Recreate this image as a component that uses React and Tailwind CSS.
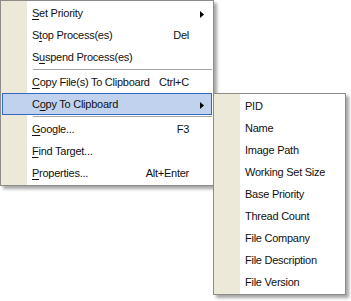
const mainItems = [
  { label: "Set Priority", u: 0, arrow: true },
  { label: "Stop Process(es)", u: 1, key: "Del" },
  { label: "Suspend Process(es)", u: 1 },
  { sep: true },
  { label: "Copy File(s) To Clipboard", u: 0, key: "Ctrl+C" },
  { label: "Copy To Clipboard", u: 1, arrow: true, active: true },
  { sep: true },
  { label: "Google...", u: 0, key: "F3" },
  { label: "Find Target...", u: 0 },
  { label: "Properties...", u: 0, key: "Alt+Enter" },
];

const subItems = [
  "PID",
  "Name",
  "Image Path",
  "Working Set Size",
  "Base Priority",
  "Thread Count",
  "File Company",
  "File Description",
  "File Version",
];

const Label = ({ text, u }) => (
  <span>
    {text.slice(0, u)}
    <span className="underline underline-offset-2">{text[u]}</span>
    {text.slice(u + 1)}
  </span>
);

const Arrow = () => (
  <svg width="4" height="7" viewBox="0 0 4 7" className="absolute right-[7px] top-[8px]">
    <polygon points="0,0 4,3.5 0,7" fill="#000" />
  </svg>
);

const Menu = ({ children, width }) => (
  <div
    className={`${width} border border-[#8d8c86] p-px bg-[linear-gradient(to_right,#ece9d8_26px,#ffffff_26px)] bg-origin-padding shadow-[3px_3px_3px_rgba(0,0,0,0.35)]`}
  >
    {children}
  </div>
);

const App = () => {
  return (
    <div
      className="w-[351px] h-[301px] bg-white flex items-start text-[11px] tracking-[-0.25px] text-[#111] overflow-hidden"
      style={{ fontFamily: '"Liberation Sans", Arial, sans-serif' }}
    >
      <Menu width="w-[214px] shrink-0">
        {mainItems.map((it, i) =>
          it.sep ? (
            <div key={i} className="h-[3px] pt-px pl-[31px]">
              <div className="h-px bg-[#a7a6a0]" />
            </div>
          ) : (
            <div
              key={i}
              className={`relative h-[22px] flex items-center pl-[30px] pr-[22px] border ${
                it.active ? "bg-[#c1d2ee] border-[#316ac5]" : "border-transparent"
              }`}
            >
              <span className="flex-1 -ml-px">
                <Label text={it.label} u={it.u} />
              </span>
              {it.key && <span>{it.key}</span>}
              {it.arrow && <Arrow />}
            </div>
          )
        )}
      </Menu>
      <div className="mt-[93px] -ml-px">
        <Menu width="w-[133px]">
          {subItems.map((s) => (
            <div key={s} className="h-[22px] flex items-center pl-[30px]">
              {s}
            </div>
          ))}
        </Menu>
      </div>
    </div>
  );
};

export default App;
